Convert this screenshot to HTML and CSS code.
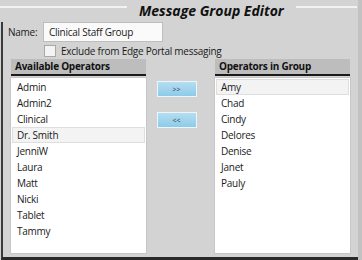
FILE: index.html
```html
<!DOCTYPE html>
<html lang="en">
<head>
    <meta charset="UTF-8">
    <title>Message Group Editor</title>
    <link rel="stylesheet" href="styles.css">
</head>
<body>
    <div class="editor">
        <div class="title-row">
            <span class="rule rule-left"></span>
            <h1>Message Group Editor</h1>
            <span class="rule rule-right"></span>
        </div>

        <div class="frame">
            <div class="name-row">
                <label>Name:</label>
                <div class="textbox">Clinical Staff Group</div>
            </div>
            <div class="check-row">
                <span class="checkbox"></span>
                <span>Exclude from Edge Portal messaging</span>
            </div>

            <div class="lists">
                <div class="column">
                    <h2 class="list-head">Available Operators</h2>
                    <ul class="list">
                        <li>Admin</li>
                        <li>Admin2</li>
                        <li>Clinical</li>
                        <li class="selected">Dr. Smith</li>
                        <li>JenniW</li>
                        <li>Laura</li>
                        <li>Matt</li>
                        <li>Nicki</li>
                        <li>Tablet</li>
                        <li>Tammy</li>
                    </ul>
                </div>

                <div class="buttons">
                    <button class="move-button">&gt;&gt;</button>
                    <button class="move-button">&lt;&lt;</button>
                </div>

                <div class="column">
                    <h2 class="list-head">Operators in Group</h2>
                    <ul class="list">
                        <li class="selected">Amy</li>
                        <li>Chad</li>
                        <li>Cindy</li>
                        <li>Delores</li>
                        <li>Denise</li>
                        <li>Janet</li>
                        <li>Pauly</li>
                    </ul>
                </div>
            </div>
        </div>
    </div>
</body>
</html>
```

FILE: styles.css
```css
* {
    box-sizing: border-box;
    margin: 0;
    padding: 0;
}

body {
    font-family: "Open Sans", sans-serif;
    font-size: 10px;
    letter-spacing: -0.25px;
    color: #1a1a1a;
    background: #d3d3d3;
}

ul {
    list-style: none;
}

.editor {
    width: 362px;
    height: 260px;
    background: #d3d3d3;
    border-right: 4px solid #c2c2c2;
    overflow: hidden;
}

/* Title with the group box line */
.title-row {
    display: flex;
    align-items: flex-start;
    height: 22px;
}

.rule {
    height: 2px;
    margin-top: 6px;
    background: #f2f2f2;
}

.rule-left {
    width: 127px;
}

.rule-right {
    flex: 1;
    margin-right: 1px;
}

.title-row h1 {
    font-size: 14px;
    font-weight: bold;
    font-style: italic;
    letter-spacing: 0;
    color: #111;
    margin: 0 12px;
    line-height: 22px;
}

/* Frame body */
.frame {
    height: 238px;
    margin-left: 1px;
    border-left: 2px solid #3a3a3a;
    border-bottom: 3px solid #2a2a2a;
}

.name-row {
    display: flex;
    align-items: center;
    height: 20px;
    padding-left: 5px;
}

.name-row label {
    width: 35px;
}

.textbox {
    width: 120px;
    height: 20px;
    line-height: 18px;
    padding-left: 5px;
    background: #fafafa;
    border: 1px solid #bdbdbd;
}

.check-row {
    display: flex;
    align-items: center;
    height: 14px;
    margin-top: 2px;
    padding-left: 41px;
}

.checkbox {
    width: 12px;
    height: 12px;
    margin-right: 5px;
    background: #f4f4f4;
    border: 1px solid #a8a8a8;
}

/* Lists and move buttons */
.lists {
    display: flex;
    margin-top: 1px;
    padding-left: 7px;
}

.column {
    width: 137px;
    display: flex;
    flex-direction: column;
}

.list-head {
    height: 17px;
    margin: 0 1px;
    padding-left: 4px;
    font-size: 10px;
    line-height: 15px;
    font-weight: bold;
    color: #111;
    background: #bdbdbd;
    border-bottom: 2px solid #1a1a1a;
}

.list {
    height: 177px;
    margin-top: 1px;
    padding: 1px;
    background: #fff;
    border: 1px solid #c6c6c6;
}

.list li {
    height: 16px;
    line-height: 15px;
    padding-left: 4px;
    border: 1px solid transparent;
}

.list li.selected {
    background: #f3f3f3;
    border-color: #dedede;
}

.buttons {
    width: 67px;
    display: flex;
    flex-direction: column;
    align-items: center;
    gap: 15px;
    padding-top: 22px;
    padding-right: 8px;
}

.move-button {
    width: 40px;
    height: 16px;
    font-family: "Open Sans", sans-serif;
    font-size: 7px;
    color: #333;
    background: linear-gradient(#b5ddf2, #8ccbe9);
    border: 1px solid #eaf6fc;
    cursor: pointer;
}
```
